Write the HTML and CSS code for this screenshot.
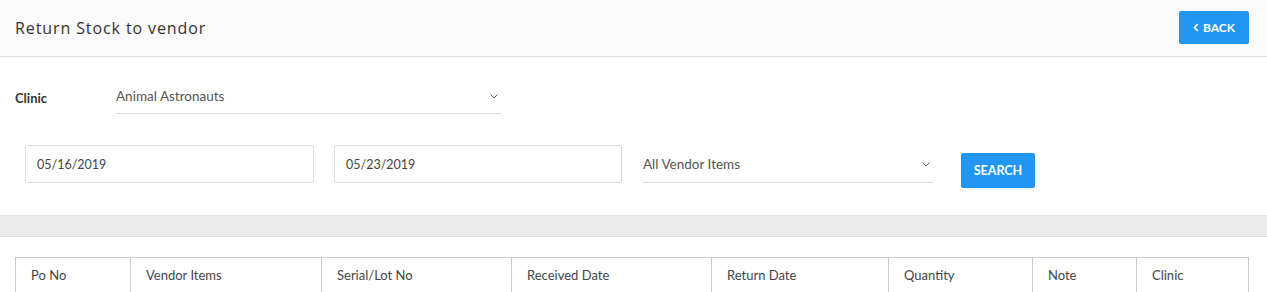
FILE: index.html
```html
<!DOCTYPE html>
<html>
<head>
<meta charset="utf-8">
<link rel="stylesheet" href="styles.css">
</head>
<body>
<header class="topbar">
  <h1 class="title">Return Stock to vendor</h1>
  <button class="btn btn-back"><svg class="chev" width="6" height="9" viewBox="0 0 6 9"><path d="M4.8 1 L1.5 4.5 L4.8 8" fill="none" stroke="#fff" stroke-width="1.8"/></svg>BACK</button>
</header>
<section class="filters">
  <div class="clinic-row">
    <label class="clinic-label">Clinic</label>
    <div class="select clinic-select"><span>Animal Astronauts</span><svg class="caret" width="8" height="5" viewBox="0 0 8 5"><path d="M0.5 0.5 L4 4 L7.5 0.5" fill="none" stroke="#666" stroke-width="1"/></svg></div>
  </div>
  <div class="search-row">
    <div class="input">05/16/2019</div>
    <div class="input">05/23/2019</div>
    <div class="select vendor-select"><span>All Vendor Items</span><svg class="caret" width="8" height="5" viewBox="0 0 8 5"><path d="M0.5 0.5 L4 4 L7.5 0.5" fill="none" stroke="#666" stroke-width="1"/></svg></div>
    <button class="btn btn-search">SEARCH</button>
  </div>
</section>
<div class="band"></div>
<section class="table-wrap">
  <table class="grid">
    <thead>
      <tr>
        <th class="c1">Po No</th>
        <th class="c2">Vendor Items</th>
        <th class="c3">Serial/Lot No</th>
        <th class="c4">Received Date</th>
        <th class="c5">Return Date</th>
        <th class="c6">Quantity</th>
        <th class="c7">Note</th>
        <th class="c8">Clinic</th>
      </tr>
    </thead>
  </table>
</section>
</body>
</html>
```
FILE: styles.css
```css
* { box-sizing: border-box; }
body {
  margin: 0;
  background: #fff;
  font-family: "Open Sans", "Noto Sans", sans-serif;
  color: #333;
}
.topbar {
  height: 57px;
  background: #fafafa;
  border-bottom: 1px solid #dedede;
  display: flex;
  align-items: center;
  justify-content: space-between;
  padding: 0 18px 1px 15px;
}
.title {
  margin: 0;
  font-weight: 400;
  font-size: 16px;
  letter-spacing: 0.9px;
  color: #333;
}
.btn {
  border: 0;
  border-radius: 2px;
  background: #2196f3;
  color: #fff;
  font-family: "Lato", sans-serif;
  font-weight: 700;
  font-size: 12px;
  cursor: pointer;
}
.btn-back {
  width: 70px;
  height: 33px;
  display: flex;
  align-items: center;
  justify-content: center;
  gap: 4px;
  padding: 0;
}
.filters {
  padding: 25px 0 27px;
}
.clinic-row {
  display: flex;
  align-items: center;
  padding-left: 15px;
  height: 32px;
}
.clinic-label {
  width: 101px;
  font-family: "Lato", sans-serif;
  font-size: 13px;
  font-weight: 700;
  color: #333;
}
.select {
  display: flex;
  align-items: center;
  justify-content: space-between;
  border-bottom: 1px solid #dcdcdc;
  font-family: "Lato", sans-serif;
  font-size: 13.5px;
  color: #555;
  padding-right: 3px;
}
.clinic-select {
  width: 385px;
  height: 32px;
  padding-bottom: 3px;
}
.search-row {
  display: flex;
  align-items: flex-start;
  padding-left: 25px;
  margin-top: 31px;
}
.input {
  width: 289px;
  height: 38px;
  border: 1px solid #dcdcdc;
  border-radius: 2px;
  padding: 0 11px;
  display: flex;
  align-items: center;
  font-family: "Lato", sans-serif;
  font-size: 12.5px;
  color: #444;
  margin-right: 20px;
}
.input + .input { width: 288px; }
.vendor-select {
  width: 290px;
  height: 38px;
  padding-top: 1px;
  margin-left: 1px;
}
.btn-search {
  width: 74px;
  height: 35px;
  margin-left: 28px;
  margin-top: 8px;
  padding: 0;
  font-size: 12.5px;
}
.band {
  height: 22px;
  background: #ebebeb;
  border-top: 1px solid #dfdfdf;
  border-bottom: 1px solid #dcdcdc;
}
.table-wrap {
  padding: 20px 18px 0 15px;
}
.grid {
  width: 100%;
  border-collapse: collapse;
  font-family: "Lato", sans-serif;
  font-size: 13px;
  color: #444;
}
.grid th {
  border: 1px solid #ccc;
  font-weight: 400;
  text-align: left;
  height: 35px;
  padding: 0 15px;
}
.c1 { width: 115px; }
.c2 { width: 191px; }
.c3 { width: 190px; }
.c4 { width: 200px; }
.c5 { width: 177px; }
.c6 { width: 144px; }
.c7 { width: 104px; }
```
